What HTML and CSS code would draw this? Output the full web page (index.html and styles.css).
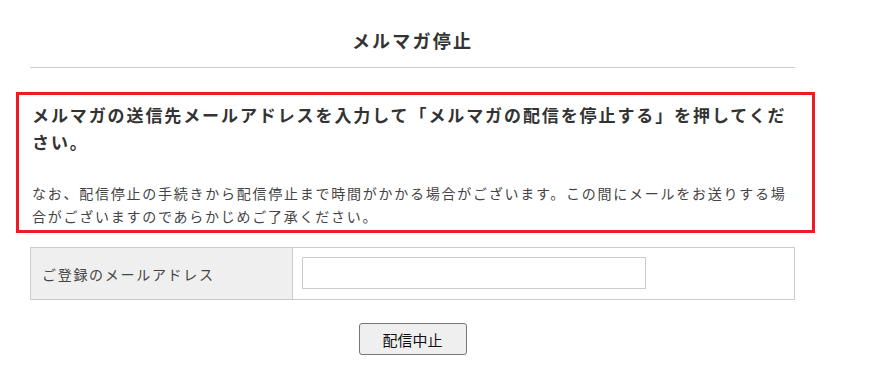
FILE: index.html
```html
<!DOCTYPE html>
<html lang="ja">
<head>
<meta charset="utf-8">
<title>メルマガ停止</title>
<link rel="stylesheet" href="styles.css">
</head>
<body>
<div class="page">
  <h1 class="title">メルマガ停止</h1>
  <div class="notice">
    <p class="notice-lead">メルマガの送信先メールアドレスを入力して「メルマガの配信を停止する」を押してください。</p>
    <p class="notice-note">なお、配信停止の手続きから配信停止まで時間がかかる場合がございます。この間にメールをお送りする場合がございますのであらかじめご了承ください。</p>
  </div>
  <form class="form">
    <div class="form-row">
      <div class="form-label">ご登録のメールアドレス</div>
      <div class="form-field"><input class="text-input" type="email"></div>
    </div>
    <div class="form-actions">
      <button class="btn" type="button">配信中止</button>
    </div>
  </form>
</div>
</body>
</html>
```

FILE: styles.css
```css
html, body {
  margin: 0;
  padding: 0;
  background: #fff;
}
body {
  font-family: "Noto Sans CJK JP", "Noto Sans", sans-serif;
  color: #333;
}
.page {
  width: 765px;
  margin-left: 30px;
}
.title {
  margin: 27px 0 0;
  padding-bottom: 13px;
  border-bottom: 1px solid #ccc;
  font-size: 18px;
  line-height: 27px;
  font-weight: bold;
  letter-spacing: 2.2px;
  text-align: center;
  color: #333;
}
.notice {
  margin: 24px -20px 0 -14px;
  border: 3px solid #ed1c24;
  padding: 6px 20px 3px 13px;
}
.notice-lead {
  margin: 0;
  font-size: 17px;
  line-height: 27px;
  font-weight: bold;
  letter-spacing: 1.9px;
  color: #333;
}
.notice-note {
  margin: 27px 0 0;
  font-size: 14px;
  line-height: 22.5px;
  letter-spacing: 1.75px;
  color: #444;
}
.form {
  margin: 14px 0 0;
}
.form-row {
  display: flex;
  border: 1px solid #ccc;
}
.form-label {
  width: 250px;
  padding-left: 11px;
  background: #efefef;
  border-right: 1px solid #ccc;
  display: flex;
  align-items: center;
  font-size: 14px;
  letter-spacing: 1.7px;
  color: #444;
}
.form-field {
  flex: 1;
  padding: 9px 9px 10px;
}
.text-input {
  display: block;
  box-sizing: border-box;
  width: 344px;
  height: 32px;
  margin: 0;
  border: 1px solid #ccc;
  background: #fff;
  padding: 0 8px;
}
.form-actions {
  display: flex;
  justify-content: center;
  margin-top: 23px;
}
.btn {
  box-sizing: border-box;
  width: 108px;
  height: 32px;
  background: #efefef;
  border: 1px solid #767676;
  border-radius: 3px;
  font-family: "Noto Sans CJK JP", sans-serif;
  font-size: 15px;
  letter-spacing: 0;
  color: #111;
  padding: 0;
}
```
